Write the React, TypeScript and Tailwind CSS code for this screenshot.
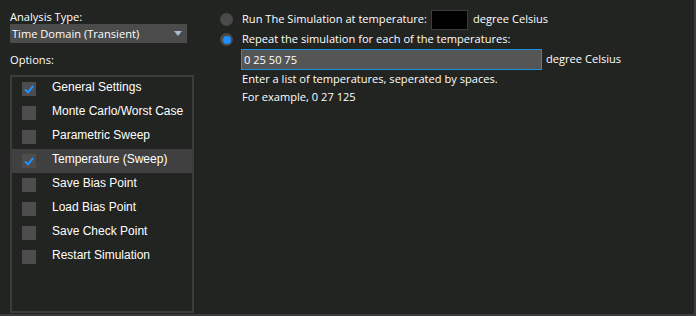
import { useState } from 'react';

const options = [
    { label: 'General Settings', checked: true },
    { label: 'Monte Carlo/Worst Case', checked: false },
    { label: 'Parametric Sweep', checked: false },
    { label: 'Temperature (Sweep)', checked: true, selected: true },
    { label: 'Save Bias Point', checked: false },
    { label: 'Load Bias Point', checked: false },
    { label: 'Save Check Point', checked: false },
    { label: 'Restart Simulation', checked: false },
];

const ui = { fontFamily: '"Open Sans", "Noto Sans", sans-serif' };
const arial = { fontFamily: '"Liberation Sans", Arial, sans-serif' };

function Check() {
    return (
        <svg viewBox="0 0 14 14" className="w-[14px] h-[14px]">
            <path d="M3 7.5 L6 10.2 L11.2 4" fill="none" stroke="#1e90ff" strokeWidth="2" />
        </svg>
    );
}

function Radio({ on }: { on: boolean }) {
    return (
        <div className="w-[13px] h-[13px] rounded-full bg-[#4a4a4a] flex items-center justify-center">
            {on && <div className="w-[8px] h-[8px] rounded-full bg-[#1e90ff]" />}
        </div>
    );
}

export default function App() {
    const [temps, setTemps] = useState('0 25 50 75');

    return (
        <div
            className="w-[696px] h-[316px] bg-[#222422] border-r-2 border-b-2 border-[#3a3b3a] flex text-white text-[11.1px]"
            style={ui}
        >
            {/* Left column */}
            <div className="w-[206px] pl-[10px] pt-[9px] flex flex-col">
                <div className="leading-[16px] h-[15px]">Analysis Type:</div>
                <div className="w-[177px] h-[19px] bg-[#4b4b4b] flex items-center justify-between pl-[2px] pr-[4px] leading-[16px]">
                    <span>Time Domain (Transient)</span>
                    <svg viewBox="0 0 8 5" className="w-[8px] h-[5px] mr-[1px]">
                        <path d="M0 0 H8 L4 5 Z" fill="#a9bcd6" />
                    </svg>
                </div>
                <div className="mt-[9px] leading-[16px] h-[23px]">Options:</div>
                <div className="w-[184px] h-[238px] border-2 border-[#3b3c3b] text-[12px]" style={arial}>
                    {options.map((o) => (
                        <div
                            key={o.label}
                            className={'h-[24px] flex items-center ' + (o.selected ? 'bg-[#404040]' : '')}
                        >
                            <div className="ml-[10px] w-[14px] h-[14px] bg-[#4d4d4d] flex items-center justify-center">
                                {o.checked && <Check />}
                            </div>
                            <span className="ml-[16px] mb-[4px]">{o.label}</span>
                        </div>
                    ))}
                </div>
            </div>

            {/* Right column */}
            <div className="pl-[14px] pt-[9px] flex flex-col">
                <div className="flex items-center h-[21px]">
                    <Radio on={false} />
                    <span className="ml-[9px]">Run The Simulation at temperature:</span>
                    <div className="ml-[4px] w-[37px] h-[20px] bg-black border border-[#3c3c3c]" />
                    <span className="ml-[5px]">degree Celsius</span>
                </div>
                <div className="flex items-center h-[19px]">
                    <Radio on={true} />
                    <span className="ml-[9px]">Repeat the simulation for each of the temperatures:</span>
                </div>
                <div className="flex items-center ml-[21px]">
                    <input
                        value={temps}
                        onChange={(e) => setTemps(e.target.value)}
                        className="w-[301px] h-[21px] bg-[#555555] border border-[#1a8fe0] px-[2px] text-white outline-none text-[11.1px]"
                        style={ui}
                    />
                    <span className="ml-[4px]">degree Celsius</span>
                </div>
                <div className="ml-[22px] leading-[18px]">
                    <div>Enter a list of temperatures, seperated by spaces.</div>
                    <div>For example, 0 27 125</div>
                </div>
            </div>
        </div>
    );
}
